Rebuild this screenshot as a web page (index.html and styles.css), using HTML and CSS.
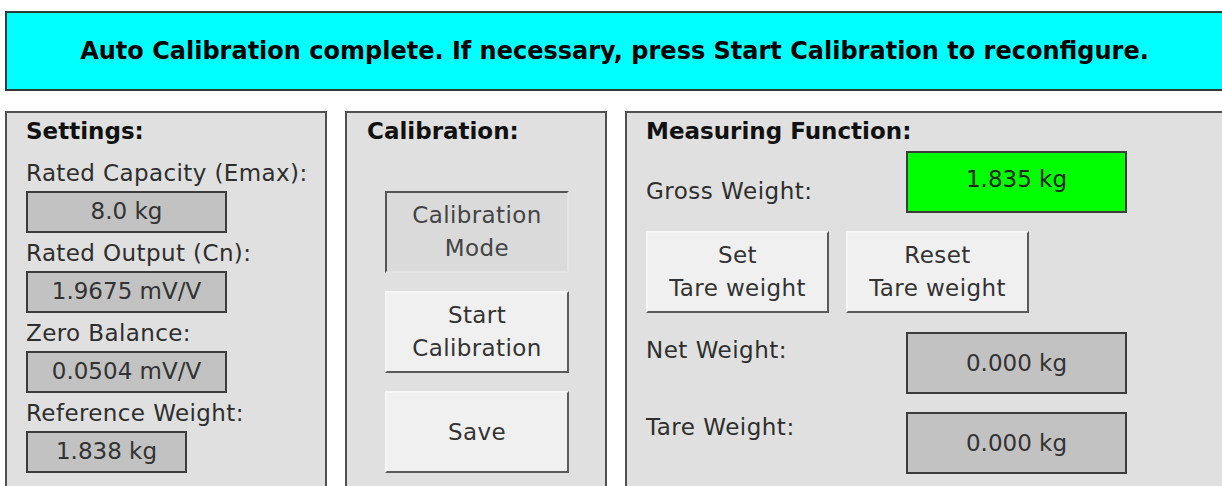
FILE: index.html
```html
<html>
<head>
<title>Auto Calibration</title>
<link rel="stylesheet" href="styles.css">
</head>
<body>
<div class="banner">Auto Calibration complete. If necessary, press Start Calibration to reconfigure.</div>

<div class="panels">

  <div class="panel settings">
    <div class="heading">Settings:</div>
    <div class="label first">Rated Capacity (Emax):</div>
    <div class="value">8.0 kg</div>
    <div class="label">Rated Output (Cn):</div>
    <div class="value">1.9675 mV/V</div>
    <div class="label">Zero Balance:</div>
    <div class="value">0.0504 mV/V</div>
    <div class="label">Reference Weight:</div>
    <div class="value short">1.838 kg</div>
  </div>

  <div class="panel calibration">
    <div class="heading">Calibration:</div>
    <div class="cal-buttons">
      <div class="btn sunken">Calibration<br>Mode</div>
      <div class="btn">Start<br>Calibration</div>
      <div class="btn">Save</div>
    </div>
  </div>

  <div class="panel measuring">
    <div class="heading">Measuring Function:</div>
    <div class="row gross">
      <div class="mlabel">Gross Weight:</div>
      <div class="readout green">1.835 kg</div>
    </div>
    <div class="tare-buttons">
      <div class="btn">Set<br>Tare weight</div>
      <div class="btn">Reset<br>Tare weight</div>
    </div>
    <div class="row net">
      <div class="mlabel">Net Weight:</div>
      <div class="readout">0.000 kg</div>
    </div>
    <div class="row tare">
      <div class="mlabel">Tare Weight:</div>
      <div class="readout">0.000 kg</div>
    </div>
  </div>

</div>
</body>
</html>
```

FILE: styles.css
```css
body {
  margin: 0;
  background: white;
  font-family: "DejaVu Sans", sans-serif;
  font-size: 23px;
  color: #2e2e2e;
  overflow: hidden;
  width: 1222px;
  height: 486px;
}

/* cyan status line across the top */
.banner {
  box-sizing: border-box;
  margin: 11px 0 0 5px;
  width: 1219px;
  height: 80px;
  background: #00ffff;
  border: 2px solid #2a3c3c;
  color: #000;
  font-weight: bold;
  font-size: 24px;
  line-height: 76px;
  text-align: center;
  white-space: nowrap;
}

.panels {
  display: flex;
  gap: 18px;
  margin: 20px 0 0 5px;
}

.panel {
  box-sizing: border-box;
  flex: none;
  height: 400px;
  background: #e0e0e0;
  border: 2px solid #505050;
  padding: 3px 0 0 19px;
}
.settings { width: 322px; }
.calibration { width: 262px; padding-left: 20px; }
.measuring { width: 640px; }

.heading {
  height: 30px;
  line-height: 30px;
  font-weight: bold;
  color: #111;
  white-space: nowrap;
}

.label {
  height: 30px;
  line-height: 30px;
  margin-top: 5px;
  letter-spacing: 0.4px;
  white-space: nowrap;
}
.label.first { margin-top: 12px; }

.value {
  box-sizing: border-box;
  width: 201px;
  height: 42px;
  margin-top: 3px;
  background: #c2c2c2;
  border: 2px solid #3c3c3c;
  line-height: 37px;
  text-align: center;
  color: #333;
}
.value.short { width: 161px; }

/* push buttons */
.btn {
  box-sizing: border-box;
  width: 184px;
  height: 82px;
  background: #f0f0f0;
  border: 2px solid #f6f6f6;
  border-right-color: #5a5a5a;
  border-bottom-color: #5a5a5a;
  display: flex;
  align-items: center;
  justify-content: center;
  text-align: center;
  line-height: 33px;
  letter-spacing: 0.4px;
  color: #333;
}
.btn.sunken {
  background: #dadada;
  border-color: #555 #e4e4e4 #e4e4e4 #555;
  color: #444;
}

.cal-buttons {
  display: flex;
  flex-direction: column;
  gap: 18px;
  margin: 45px 0 0 18px;
}

.row {
  display: flex;
  align-items: flex-start;
}
.mlabel {
  width: 260px;
  height: 30px;
  line-height: 30px;
  letter-spacing: 0.5px;
  white-space: nowrap;
}
.gross { margin-top: 5px; }
.gross .mlabel { padding-top: 25px; }
.net { margin-top: 19px; }
.net .mlabel { padding-top: 3px; }
.tare { margin-top: 18px; }

.readout {
  box-sizing: border-box;
  width: 221px;
  height: 62px;
  background: #c2c2c2;
  border: 2px solid #3c3c3c;
  line-height: 58px;
  text-align: center;
  color: #333;
}
.readout.green {
  background: #00ff00;
  line-height: 52px;
  color: #222;
}

.tare-buttons {
  display: flex;
  gap: 17px;
  margin-top: 18px;
}
.tare-buttons .btn { width: 183px; }
```
